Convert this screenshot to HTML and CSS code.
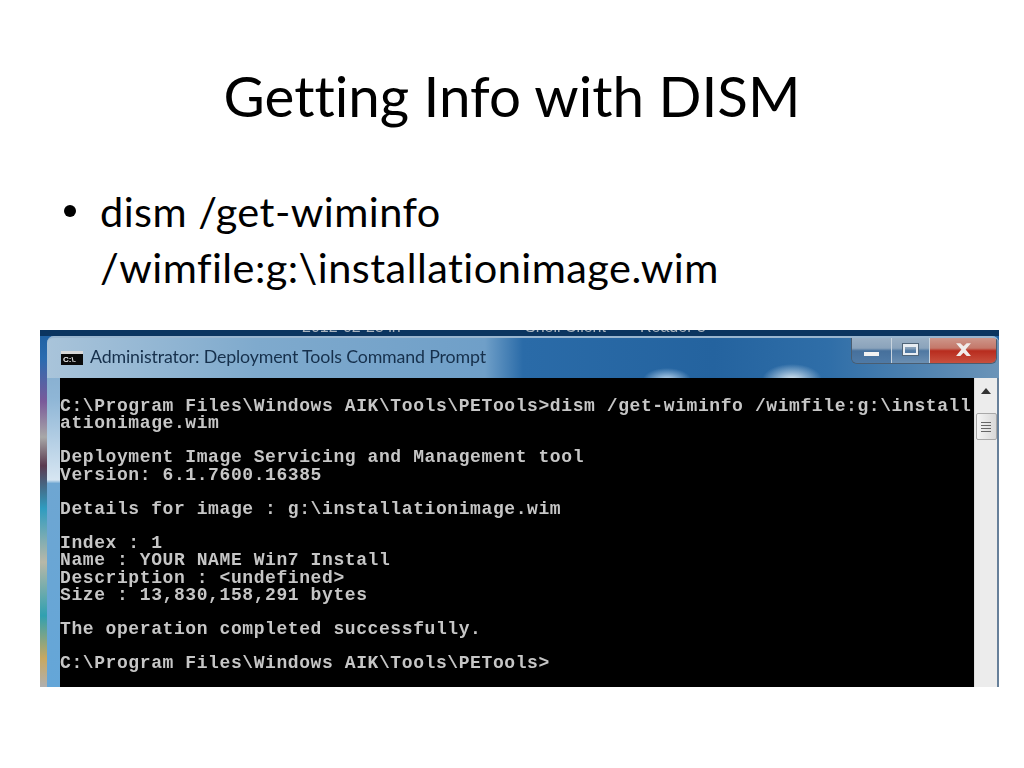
FILE: index.html
```html
<!DOCTYPE html>
<html lang="en">
<head>
<meta charset="utf-8">
<title>Getting Info with DISM</title>
<link rel="stylesheet" href="styles.css">
</head>
<body>
<main class="slide">
  <h1 class="title">Getting Info with DISM</h1>
  <ul class="bullets">
    <li>dism /get-wiminfo<br>/wimfile:g:\installationimage.wim</li>
  </ul>
  <section class="shot">
    <div class="taskstrip"><span class="a">2012-02-25 in</span><span class="b">Shell Client</span><span class="c">Reader 5</span></div>
    <div class="window">
      <div class="titlebar">
        <svg class="appicon" viewBox="0 0 22 14"><rect width="22" height="14" fill="#d8d8d8"/><rect x="0" y="3" width="22" height="11" fill="#0a0a0a"/><text x="2" y="11" font-size="8" font-family="Liberation Sans" font-weight="700" fill="#eee">C:\.</text></svg>
        <span class="wintitle">Administrator: Deployment Tools Command Prompt</span>
        <div class="controls">
          <div class="ctl min"><i></i></div>
          <div class="ctl max"><i></i></div>
          <div class="ctl close"><svg viewBox="0 0 16 12"><path d="M1 0h4l3 3 3-3h4l-5 6 5 6h-4l-3-3-3 3H1l5-6z" fill="#f0ecea"/></svg></div>
        </div>
      </div>
      <div class="client">
        <pre class="console">C:\Program Files\Windows AIK\Tools\PETools&gt;dism /get-wiminfo /wimfile:g:\install
ationimage.wim

Deployment Image Servicing and Management tool
Version: 6.1.7600.16385

Details for image : g:\installationimage.wim

Index : 1
Name : YOUR NAME Win7 Install
Description : &lt;undefined&gt;
Size : 13,830,158,291 bytes

The operation completed successfully.

C:\Program Files\Windows AIK\Tools\PETools&gt;</pre>
        <div class="scrollbar">
          <svg class="arrow" viewBox="0 0 10 6"><path d="M5 0l5 6H0z" fill="#333"/></svg>
          <div class="thumb"><b></b><b></b><b></b><b></b></div>
        </div>
      </div>
    </div>
  </section>
</main>
</body>
</html>
```
FILE: styles.css
```css
* { box-sizing: border-box; }
html, body { margin: 0; padding: 0; background: #fff; }
.slide { width: 1024px; height: 768px; overflow: hidden; background: #fff; font-family: Lato, "Open Sans", sans-serif; color: #000; font-variant-ligatures: none; }
.title { margin: 0; padding-top: 60px; height: 180px; font-size: 56.5px; line-height: 70px; font-weight: 400; text-align: center; }
.bullets { list-style: none; margin: 0; padding: 3px 0 0 100px; height: 150px; }
.bullets li { position: relative; font-size: 41.5px; line-height: 56px; letter-spacing: .45px; }
.bullets li::before { content: ""; position: absolute; left: -36px; top: 22px; width: 12px; height: 12px; border-radius: 50%; background: #000; }
.shot { position: relative; margin-left: 40px; width: 959px; height: 357px; overflow: hidden; filter: blur(.35px); background: linear-gradient(180deg, #1d5fa0 0, #2a6cb0 8%, #7a5a9a 20%, #a8a8a8 30%, #5a3a50 38%, #2f9cc0 50%, #b8b8a8 65%, #30a0b0 80%, #c8a860 92%, #b0b0b0 100%); }
.taskstrip { height: 6px; background: #0b3560; position: relative; overflow: hidden; color: #aab4be; font: 16px "Liberation Sans", sans-serif; }
.taskstrip span { position: absolute; top: -12px; }
.taskstrip .a { left: 262px; }
.taskstrip .b { left: 485px; }
.taskstrip .c { left: 600px; }
.window { position: absolute; left: 7px; top: 6px; width: 952px; height: 351px; display: flex; flex-direction: column; border-radius: 7px 7px 0 0; background: linear-gradient(180deg, #7ea6c8 0, #8fb6d6 18%, #d7e6f2 41%, #6ea6d2 42%, #64a6d8 100%); }
.titlebar { position: relative; height: 42px; flex: none; display: flex; align-items: center; padding-left: 14px; overflow: hidden; border-top: 2px solid #9ab6cf; border-radius: 7px 7px 0 0; background: radial-gradient(ellipse 24px 12px at 620px 42px, #bcd8f0 0, rgba(188,216,240,0) 100%), radial-gradient(ellipse 30px 16px at 745px 42px, #dceaf4 0, rgba(220,234,244,0) 100%), linear-gradient(90deg, #a9c4da 0, #7faacd 22%, #6f9fc8 46%, #2a6ba8 50%, #24639f 70%, #2f6ea8 82%, #6b94b8 100%); }
.appicon { width: 22px; height: 14px; flex: none; }
.wintitle { margin: 0 0 4px 7px; font: 17.8px Lato, "Open Sans", sans-serif; color: #16304c; letter-spacing: -.15px; font-variant-ligatures: none; }
.controls { position: absolute; right: 2px; top: -2px; display: flex; height: 28px; border: 1px solid #4a5d70; border-top: 0; border-radius: 0 0 6px 6px; overflow: hidden; }
.ctl { display: flex; align-items: center; justify-content: center; height: 100%; border-right: 1px solid #c8d4de; }
.ctl.min { width: 40px; background: linear-gradient(180deg, #9db2c6 0, #8aa3bb 45%, #46709c 55%, #4f7aa6 100%); }
.ctl.min i { display: block; width: 15px; height: 4px; margin-top: 8px; background: #f2f2f2; }
.ctl.max { width: 38px; background: linear-gradient(180deg, #9db2c6 0, #8aa3bb 45%, #4f78a2 55%, #6b8fb2 100%); }
.ctl.max i { display: block; width: 15px; height: 11px; border: 2px solid #e8edf2; border-top-width: 3px; box-shadow: 0 0 0 1px #506578; }
.ctl.close { width: 66px; border-right: 0; background: linear-gradient(180deg, #cf9c90 0, #c4786a 45%, #b82c1e 55%, #c8503e 100%); }
.ctl.close svg { width: 17px; height: 13px; }
.client { flex: 1; min-height: 0; display: flex; margin: 0 0 0 13px; background: #000; }
.console { flex: none; width: 914px; margin: 0; padding: 20px 0 0 0; overflow: hidden; background: #000; color: #c6c6c6; font: 700 18px/17.15px "Liberation Mono", monospace; letter-spacing: .59px; white-space: pre; }
.scrollbar { width: 25px; flex: none; background: #ececec; border-left: 1px solid #ddd; border-right: 2px solid #67809a; display: flex; flex-direction: column; align-items: center; padding-top: 10px; }
.arrow { width: 10px; height: 6px; }
.thumb { margin-top: 19px; width: 21px; height: 27px; border: 1px solid #a8a8a8; border-radius: 2px; background: linear-gradient(90deg, #f4f4f4, #d8d8d8); display: flex; flex-direction: column; align-items: center; justify-content: center; gap: 2px; }
.thumb b { display: block; width: 10px; height: 1px; background: #666; }
```
